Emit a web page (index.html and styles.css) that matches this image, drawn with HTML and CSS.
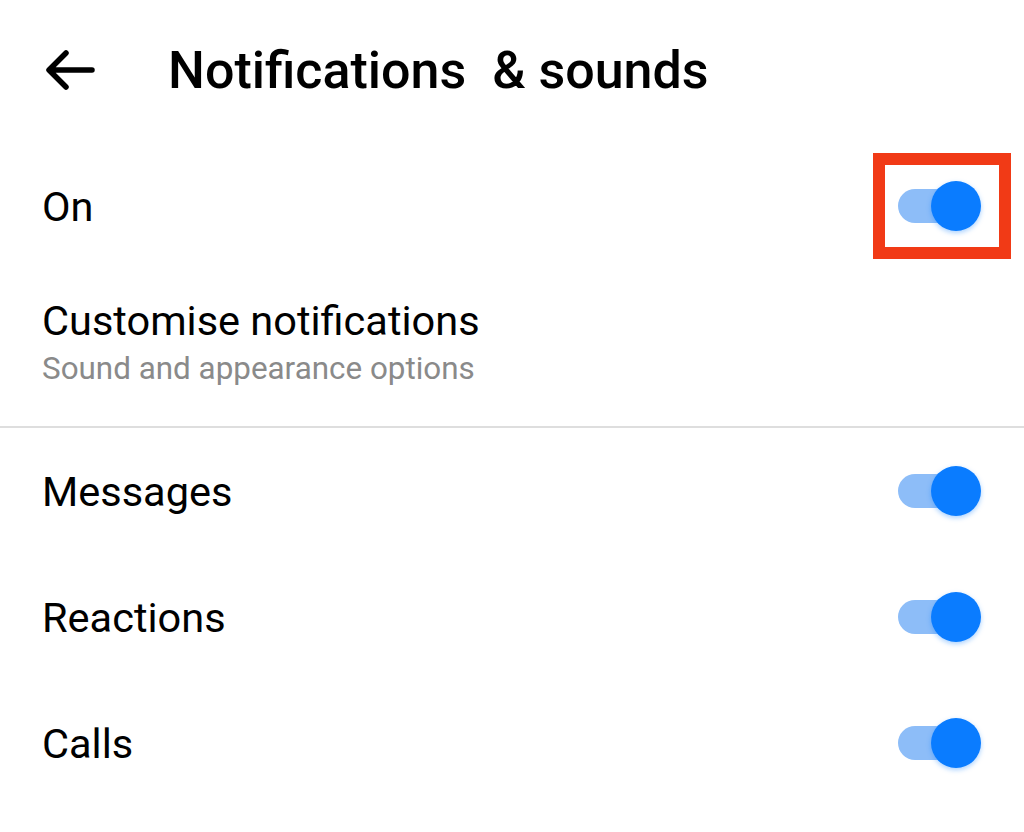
FILE: index.html
```html
<!DOCTYPE html>
<html lang="en">

<head>
  <meta charset="UTF-8">
  <meta name="viewport" content="width=device-width, initial-scale=1.0">
  <title>Notifications &amp; sounds</title>
  <link rel="stylesheet" href="styles.css">
</head>

<body>
  <header class="top-bar">
    <button class="back" aria-label="Back">
      <svg width="52" height="42" viewBox="0 0 52 42">
        <path d="M48 21H6M22 4L5 21l17 17" fill="none" stroke="#000" stroke-width="5.5" stroke-linecap="round" stroke-linejoin="round" />
      </svg>
    </button>
    <h1>Notifications&nbsp; &amp; sounds</h1>
  </header>

  <div class="row row-on">
    <span class="label">On</span>
    <div class="toggle-wrap">
      <span class="toggle"><span class="thumb"></span></span>
      <span class="highlight"></span>
    </div>
  </div>

  <div class="row row-custom">
    <div class="stack">
      <span class="label">Customise notifications</span>
      <span class="sub">Sound and appearance options</span>
    </div>
  </div>

  <hr class="divider">

  <div class="row row-item">
    <span class="label">Messages</span>
    <span class="toggle"><span class="thumb"></span></span>
  </div>
  <div class="row row-item">
    <span class="label">Reactions</span>
    <span class="toggle"><span class="thumb"></span></span>
  </div>
  <div class="row row-item">
    <span class="label">Calls</span>
    <span class="toggle"><span class="thumb"></span></span>
  </div>
</body>

</html>
```

FILE: styles.css
```css
* {
  box-sizing: border-box;
  font-family: Roboto, 'Liberation Sans', sans-serif;
}

body {
  margin: 0;
  background: #fff;
  color: #000;
}

.top-bar {
  display: flex;
  align-items: center;
  height: 140px;
  padding-left: 44px;
}

.top-bar>button.back {
  display: flex;
  border: none;
  background: none;
  padding: 0;
  margin-right: 72px;
  cursor: pointer;
}

.top-bar>h1 {
  margin: 0;
  font-size: 52px;
  font-weight: 500;
  white-space: nowrap;
}

.row {
  display: flex;
  align-items: center;
  justify-content: space-between;
  padding: 0 43px 0 42px;
}

.row-on {
  height: 132px;
}

.row-custom {
  height: 154px;
  align-items: flex-start;
  padding-top: 24px;
}

.row-item {
  height: 126px;
}

.label {
  font-size: 41.5px;
}

.stack {
  display: flex;
  flex-direction: column;
  gap: 5px;
}

.sub {
  font-size: 31.4px;
  color: #8a8a8a;
}

.divider {
  margin: 0;
  border: none;
  height: 2px;
  background: #dedede;
}

.toggle {
  position: relative;
  display: block;
  width: 83px;
  height: 50px;
}

.toggle::before {
  content: '';
  position: absolute;
  left: 0;
  top: 8px;
  width: 68px;
  height: 34px;
  border-radius: 17px;
  background: #8dbdf8;
}

.toggle>.thumb {
  position: absolute;
  right: 0;
  top: 0;
  width: 50px;
  height: 50px;
  border-radius: 50%;
  background: #0a7cff;
  box-shadow: 0 2px 5px rgba(10, 124, 255, 0.35);
}

.toggle-wrap {
  position: relative;
}

.toggle-wrap>.highlight {
  position: absolute;
  left: -25px;
  top: -28px;
  width: 138px;
  height: 106px;
  border: 12px solid #f13a16;
}
```
